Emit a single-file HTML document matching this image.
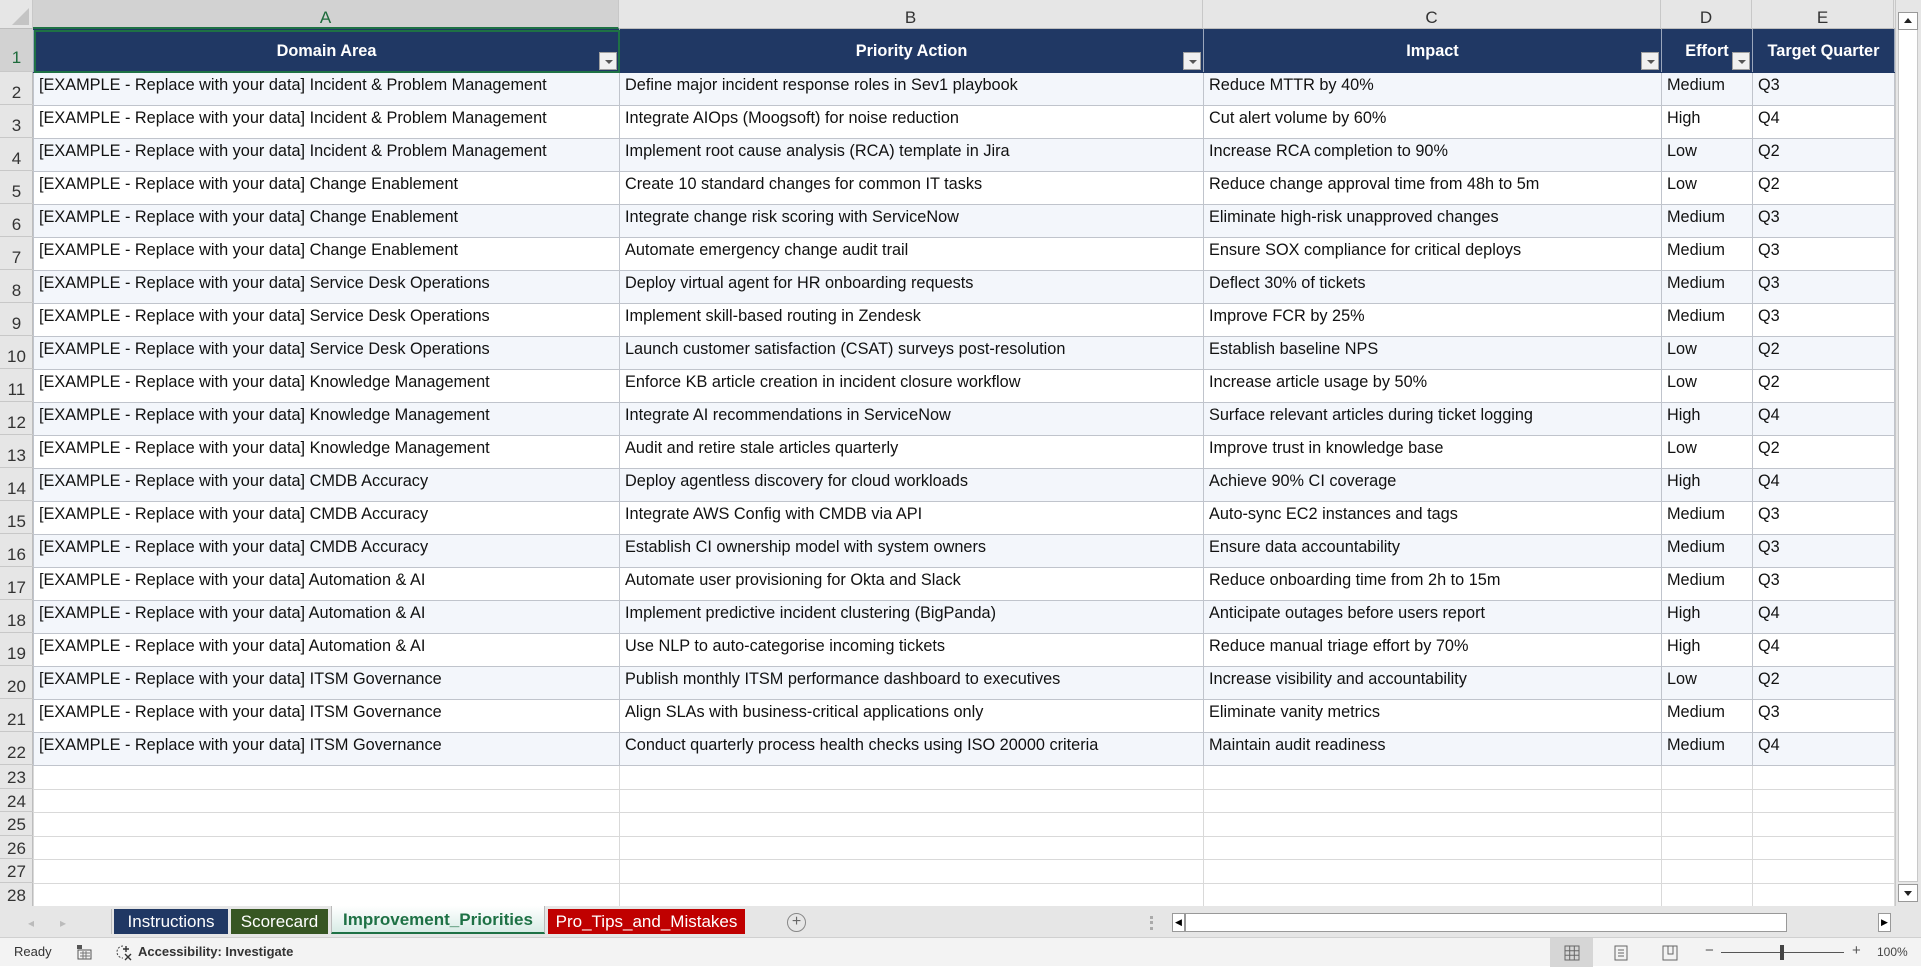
<!DOCTYPE html>
<html><head><meta charset="utf-8"><style>
*{margin:0;padding:0;box-sizing:border-box}
body{width:1921px;height:966px;overflow:hidden;background:#fff;font-family:"Liberation Sans",Arial,sans-serif;position:relative}
.abs{position:absolute}
#ch{left:0;top:0;width:1896px;height:29px;background:#e6e6e6;border-bottom:1px solid #bdbdbd}
.cl{position:absolute;top:0;height:29px;border-right:1px solid #c8c8c8;text-align:center;font-size:17px;line-height:35px;color:#333}
#rh{left:0;top:29px;width:33px;height:877px;background:#e6e6e6;border-right:1px solid #bdbdbd}
.rn{position:absolute;left:0;width:33px;text-align:center;font-size:17px;color:#333;border-bottom:1px solid #c8c8c8}
table{position:absolute;left:33px;top:29px;border-collapse:collapse;table-layout:fixed;font-size:16.3px}
td{border:1px solid #c0c4cc;padding:3px 0 0 5px;vertical-align:top;white-space:nowrap;overflow:hidden;height:33px;color:#111}
tr.h td{height:43px;background:#203864;color:#fff;font-weight:bold;text-align:center;vertical-align:middle;padding:0;position:relative;border-color:#203864 #9aa6bb}
tr.a td{background:#f3f6fb}
tr.e td{height:23.5px;border-color:#d9d9d9}
.fb{position:absolute;right:2px;bottom:2px;width:18px;height:18px;background:#f0f0f0;border:1px solid #a0a0a0}
.fb:after{content:"";position:absolute;left:5px;top:7px;border-left:4px solid transparent;border-right:4px solid transparent;border-top:4px solid #555}
#tabs{left:0;top:906px;width:1921px;height:31px;background:#e6e6e6}
.tab{position:absolute;top:3px;height:25px;font-size:17px;line-height:25px;text-align:center;color:#fff}
#status{left:0;top:937px;width:1921px;height:29px;background:#f3f3f3;border-top:1px solid #d0d0d0;font-size:13px;color:#333}
</style></head><body>
<div id="ch" class="abs">
<div class="cl" style="left:0;width:33px"><svg width="33" height="29"><polygon points="29,8 29,25 12,25" fill="#c4c4c4"/></svg></div>
<div class="cl" style="left:33px;width:586px;color:#1e6b3c;background:#d2d2d2;border-bottom:2px solid #1e7145">A</div>
<div class="cl" style="left:619px;width:584px">B</div>
<div class="cl" style="left:1203px;width:458px">C</div>
<div class="cl" style="left:1661px;width:91px">D</div>
<div class="cl" style="left:1752px;width:142px">E</div>
</div>
<div id="rh" class="abs">
<div class="rn" style="top:0;height:43px;line-height:58px;background:#d2d2d2;color:#1e6b3c">1</div>
<div class="rn" style="top:43px;height:33px;line-height:42px">2</div>
<div class="rn" style="top:76px;height:33px;line-height:42px">3</div>
<div class="rn" style="top:109px;height:33px;line-height:42px">4</div>
<div class="rn" style="top:142px;height:33px;line-height:42px">5</div>
<div class="rn" style="top:175px;height:33px;line-height:42px">6</div>
<div class="rn" style="top:208px;height:33px;line-height:42px">7</div>
<div class="rn" style="top:241px;height:33px;line-height:42px">8</div>
<div class="rn" style="top:274px;height:33px;line-height:42px">9</div>
<div class="rn" style="top:307px;height:33px;line-height:42px">10</div>
<div class="rn" style="top:340px;height:33px;line-height:42px">11</div>
<div class="rn" style="top:373px;height:33px;line-height:42px">12</div>
<div class="rn" style="top:406px;height:33px;line-height:42px">13</div>
<div class="rn" style="top:439px;height:33px;line-height:42px">14</div>
<div class="rn" style="top:472px;height:33px;line-height:42px">15</div>
<div class="rn" style="top:505px;height:33px;line-height:42px">16</div>
<div class="rn" style="top:538px;height:33px;line-height:42px">17</div>
<div class="rn" style="top:571px;height:33px;line-height:42px">18</div>
<div class="rn" style="top:604px;height:33px;line-height:42px">19</div>
<div class="rn" style="top:637px;height:33px;line-height:42px">20</div>
<div class="rn" style="top:670px;height:33px;line-height:42px">21</div>
<div class="rn" style="top:703px;height:33px;line-height:42px">22</div>
<div class="rn" style="top:736px;height:23.5px;line-height:26px">23</div>
<div class="rn" style="top:759.5px;height:23.5px;line-height:26px">24</div>
<div class="rn" style="top:783px;height:23.5px;line-height:26px">25</div>
<div class="rn" style="top:806.5px;height:23.5px;line-height:26px">26</div>
<div class="rn" style="top:830px;height:23.5px;line-height:26px">27</div>
<div class="rn" style="top:853.5px;height:23.5px;line-height:26px;border:0">28</div>
</div>
<table>
<colgroup><col style="width:586px"><col style="width:584px"><col style="width:458px"><col style="width:91px"><col style="width:142px"></colgroup>
<tr class="h"><td style="outline:2px solid #1e7145;outline-offset:-2px">Domain Area<div class="fb"></div></td><td>Priority Action<div class="fb"></div></td><td>Impact<div class="fb"></div></td><td>Effort<div class="fb"></div></td><td>Target Quarter</td></tr>
<tr class="a"><td>[EXAMPLE - Replace with your data] Incident &amp; Problem Management</td><td>Define major incident response roles in Sev1 playbook</td><td>Reduce MTTR by 40%</td><td>Medium</td><td>Q3</td></tr>
<tr><td>[EXAMPLE - Replace with your data] Incident &amp; Problem Management</td><td>Integrate AIOps (Moogsoft) for noise reduction</td><td>Cut alert volume by 60%</td><td>High</td><td>Q4</td></tr>
<tr class="a"><td>[EXAMPLE - Replace with your data] Incident &amp; Problem Management</td><td>Implement root cause analysis (RCA) template in Jira</td><td>Increase RCA completion to 90%</td><td>Low</td><td>Q2</td></tr>
<tr><td>[EXAMPLE - Replace with your data] Change Enablement</td><td>Create 10 standard changes for common IT tasks</td><td>Reduce change approval time from 48h to 5m</td><td>Low</td><td>Q2</td></tr>
<tr class="a"><td>[EXAMPLE - Replace with your data] Change Enablement</td><td>Integrate change risk scoring with ServiceNow</td><td>Eliminate high-risk unapproved changes</td><td>Medium</td><td>Q3</td></tr>
<tr><td>[EXAMPLE - Replace with your data] Change Enablement</td><td>Automate emergency change audit trail</td><td>Ensure SOX compliance for critical deploys</td><td>Medium</td><td>Q3</td></tr>
<tr class="a"><td>[EXAMPLE - Replace with your data] Service Desk Operations</td><td>Deploy virtual agent for HR onboarding requests</td><td>Deflect 30% of tickets</td><td>Medium</td><td>Q3</td></tr>
<tr><td>[EXAMPLE - Replace with your data] Service Desk Operations</td><td>Implement skill-based routing in Zendesk</td><td>Improve FCR by 25%</td><td>Medium</td><td>Q3</td></tr>
<tr class="a"><td>[EXAMPLE - Replace with your data] Service Desk Operations</td><td>Launch customer satisfaction (CSAT) surveys post-resolution</td><td>Establish baseline NPS</td><td>Low</td><td>Q2</td></tr>
<tr><td>[EXAMPLE - Replace with your data] Knowledge Management</td><td>Enforce KB article creation in incident closure workflow</td><td>Increase article usage by 50%</td><td>Low</td><td>Q2</td></tr>
<tr class="a"><td>[EXAMPLE - Replace with your data] Knowledge Management</td><td>Integrate AI recommendations in ServiceNow</td><td>Surface relevant articles during ticket logging</td><td>High</td><td>Q4</td></tr>
<tr><td>[EXAMPLE - Replace with your data] Knowledge Management</td><td>Audit and retire stale articles quarterly</td><td>Improve trust in knowledge base</td><td>Low</td><td>Q2</td></tr>
<tr class="a"><td>[EXAMPLE - Replace with your data] CMDB Accuracy</td><td>Deploy agentless discovery for cloud workloads</td><td>Achieve 90% CI coverage</td><td>High</td><td>Q4</td></tr>
<tr><td>[EXAMPLE - Replace with your data] CMDB Accuracy</td><td>Integrate AWS Config with CMDB via API</td><td>Auto-sync EC2 instances and tags</td><td>Medium</td><td>Q3</td></tr>
<tr class="a"><td>[EXAMPLE - Replace with your data] CMDB Accuracy</td><td>Establish CI ownership model with system owners</td><td>Ensure data accountability</td><td>Medium</td><td>Q3</td></tr>
<tr><td>[EXAMPLE - Replace with your data] Automation &amp; AI</td><td>Automate user provisioning for Okta and Slack</td><td>Reduce onboarding time from 2h to 15m</td><td>Medium</td><td>Q3</td></tr>
<tr class="a"><td>[EXAMPLE - Replace with your data] Automation &amp; AI</td><td>Implement predictive incident clustering (BigPanda)</td><td>Anticipate outages before users report</td><td>High</td><td>Q4</td></tr>
<tr><td>[EXAMPLE - Replace with your data] Automation &amp; AI</td><td>Use NLP to auto-categorise incoming tickets</td><td>Reduce manual triage effort by 70%</td><td>High</td><td>Q4</td></tr>
<tr class="a"><td>[EXAMPLE - Replace with your data] ITSM Governance</td><td>Publish monthly ITSM performance dashboard to executives</td><td>Increase visibility and accountability</td><td>Low</td><td>Q2</td></tr>
<tr><td>[EXAMPLE - Replace with your data] ITSM Governance</td><td>Align SLAs with business-critical applications only</td><td>Eliminate vanity metrics</td><td>Medium</td><td>Q3</td></tr>
<tr class="a"><td>[EXAMPLE - Replace with your data] ITSM Governance</td><td>Conduct quarterly process health checks using ISO 20000 criteria</td><td>Maintain audit readiness</td><td>Medium</td><td>Q4</td></tr>
<tr class="e"><td></td><td></td><td></td><td></td><td></td></tr>
<tr class="e"><td></td><td></td><td></td><td></td><td></td></tr>
<tr class="e"><td></td><td></td><td></td><td></td><td></td></tr>
<tr class="e"><td></td><td></td><td></td><td></td><td></td></tr>
<tr class="e"><td></td><td></td><td></td><td></td><td></td></tr>
<tr class="e"><td></td><td></td><td></td><td></td><td></td></tr>
</table>
<div class="abs" style="left:1895px;top:0;width:26px;height:906px;background:#e6e6e6;border-left:1px solid #c8c8c8"></div>
<div class="abs" style="left:1898px;top:12px;width:20px;height:870px;background:#fff;border:1px solid #c8c8c8"></div>
<div class="abs" style="left:1898px;top:12px;width:20px;height:18px;background:#fff;border:1px solid #999"><div style="margin:5px 0 0 5px;width:0;height:0;border-left:4px solid transparent;border-right:4px solid transparent;border-bottom:5px solid #222"></div></div>
<div class="abs" style="left:1898px;top:884px;width:20px;height:18px;background:#fff;border:1px solid #999"><div style="margin:6px 0 0 5px;width:0;height:0;border-left:4px solid transparent;border-right:4px solid transparent;border-top:5px solid #222"></div></div>
<div id="tabs" class="abs">
<div class="abs" style="left:28px;top:10px;color:#bbb;font-size:12px">◂</div>
<div class="abs" style="left:60px;top:10px;color:#bbb;font-size:12px">▸</div>
<div class="abs" style="left:111px;top:3px;width:1px;height:25px;background:#bbb"></div>
<div class="tab" style="left:114px;width:114px;background:#203864">Instructions</div>
<div class="tab" style="left:231px;width:97px;background:#375623">Scorecard</div>
<div class="tab" style="left:331px;width:214px;top:0;height:28px;line-height:28px;background:linear-gradient(#fff,#d8ece6);color:#1e7145;font-weight:bold;border:1px solid #bbb;border-top:0;border-bottom:2px solid #1e7145">Improvement_Priorities</div>
<div class="tab" style="left:548px;width:197px;background:#c00000">Pro_Tips_and_Mistakes</div>
<div class="abs" style="left:787px;top:7px;width:19px;height:19px;border:1px solid #888;border-radius:50%;text-align:center;line-height:16px;color:#666;font-size:16px">+</div>
<div class="abs" style="left:1150px;top:10px;width:3px;height:14px;border-left:3px dotted #aaa"></div>
<div class="abs" style="left:1172px;top:7px;width:722px;height:19px;background:#e6e6e6"></div>
<div class="abs" style="left:1172px;top:7px;width:13px;height:19px;background:#fff;border:1px solid #999;font-size:9px;line-height:17px;text-align:center">◀</div>
<div class="abs" style="left:1185px;top:7px;width:602px;height:19px;background:#fff;border:1px solid #999"></div>
<div class="abs" style="left:1878px;top:7px;width:13px;height:19px;background:#fff;border:1px solid #999;font-size:9px;line-height:17px;text-align:center">▶</div>
</div>
<div id="status" class="abs">
<div class="abs" style="left:14px;top:6px">Ready</div>
<svg class="abs" style="left:76px;top:6px" width="16" height="16"><rect x="1" y="1" width="5" height="4" fill="#555"/><rect x="2" y="6" width="13" height="9" fill="none" stroke="#555"/><path d="M4 9h10M4 12h10M7 7v8M10 7v8" stroke="#777"/></svg>
<svg class="abs" style="left:116px;top:5px" width="18" height="18"><path d="M7 3a6 6 0 1 0 0 12" fill="none" stroke="#444" stroke-dasharray="2 1.5"/><path d="M10 3v6M7 6h6M9 11l6 6M15 11l-6 6" stroke="#333" stroke-width="1.4"/></svg>
<div class="abs" style="left:138px;top:6px;font-weight:bold">Accessibility: Investigate</div>
<div class="abs" style="left:1550px;top:0;width:43px;height:29px;background:#d6d6d6"></div>
<svg class="abs" style="left:1564px;top:7px" width="16" height="16"><path d="M1 1h14v14H1zM1 5.7h14M1 10.3h14M5.7 1v14M10.3 1v14" fill="none" stroke="#666"/></svg>
<svg class="abs" style="left:1614px;top:7px" width="14" height="16"><rect x="1" y="1" width="12" height="14" fill="none" stroke="#666"/><path d="M4 5h6M4 8h6M4 11h6" stroke="#666"/></svg>
<svg class="abs" style="left:1662px;top:7px" width="16" height="16"><path d="M1 1h14v14H1zM6 1v8h5V1" fill="none" stroke="#666"/></svg>
<div class="abs" style="left:1705px;top:4px;font-size:15px;color:#555">−</div>
<div class="abs" style="left:1721px;top:14px;width:123px;height:1px;background:#555"></div>
<div class="abs" style="left:1780px;top:7px;width:4px;height:15px;background:#444"></div>
<div class="abs" style="left:1852px;top:4px;font-size:15px;color:#555">+</div>
<div class="abs" style="left:1877px;top:7px;font-size:12px;color:#444">100%</div>
</div>
</body></html>
